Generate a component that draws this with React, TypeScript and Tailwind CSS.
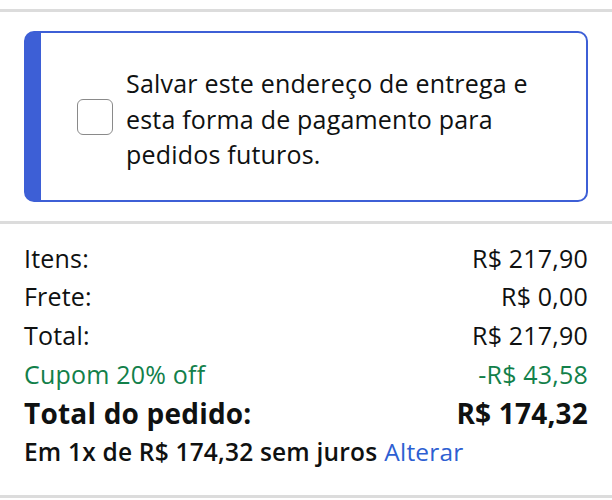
import type { ReactNode } from "react";

function Row({
  label,
  value,
  className = "",
}: {
  label: ReactNode;
  value: ReactNode;
  className?: string;
}) {
  return (
    <div className={`flex h-[38.7px] items-center justify-between ${className}`}>
      <span>{label}</span>
      <span>{value}</span>
    </div>
  );
}

export default function App() {
  return (
    <div className="h-[500px] w-[612px] overflow-hidden bg-white font-['Open_Sans',sans-serif] tracking-[0.2px] text-[#0f1111]">
      <div className="mt-[9px] h-[3px] bg-[#dcdcdc]" />

      <div className="px-6 pt-[19px] pb-[19px]">
        <div className="flex h-[171px] items-center overflow-hidden rounded-[10px] border-2 border-l-[17px] border-[#3d5fd6] pl-[36px] pr-6">
          <div className="h-[36px] w-[36px] shrink-0 rounded-[6px] border-[1.5px] border-[#8a8a8a] bg-white" />
          <p className="ml-[13px] pt-[6px] text-[25px] leading-[35.5px]">
            Salvar este endereço de entrega e esta forma de pagamento para pedidos futuros.
          </p>
        </div>
      </div>

      <div className="h-[3px] bg-[#dcdcdc]" />

      <div className="px-6 pt-[15px] text-[25px]">
        <Row label="Itens:" value="R$ 217,90" />
        <Row label="Frete:" value="R$ 0,00" />
        <Row label="Total:" value="R$ 217,90" />
        <Row label="Cupom 20% off" value="-R$ 43,58" className="text-[#12804a]" />
        <Row
          label="Total do pedido:"
          value="R$ 174,32"
          className="text-[28px] font-bold"
        />
        <div className="flex h-[40px] items-center text-[24.5px] font-semibold">
          Em 1x de R$ 174,32 sem juros
          <span className="ml-[7px] font-normal text-[#2d5fd2]">Alterar</span>
        </div>
      </div>

      <div className="mt-[23px] h-[3px] bg-[#dcdcdc]" />
    </div>
  );
}
